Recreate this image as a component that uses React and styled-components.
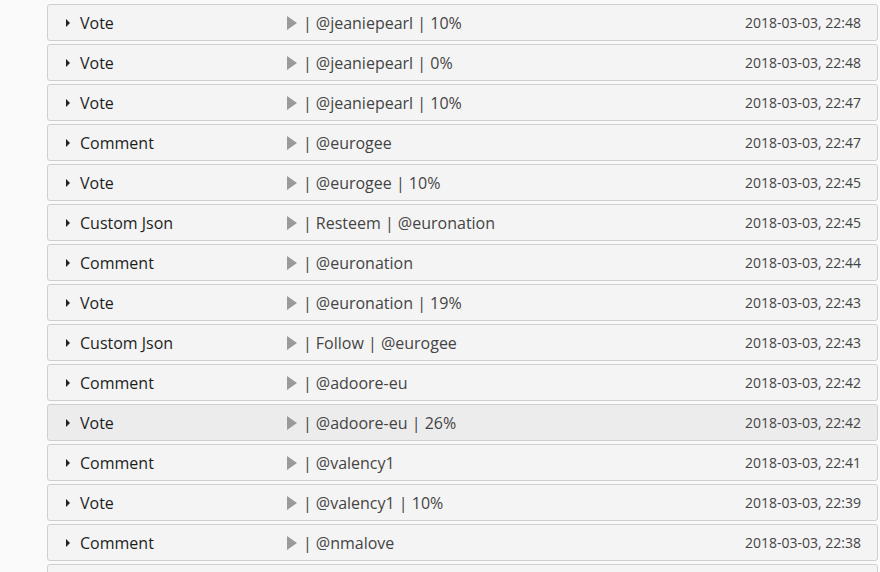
import React from "react";
import styled, { createGlobalStyle } from "styled-components";

const GlobalStyle = createGlobalStyle`
  html, body {
    margin: 0;
    padding: 0;
    background: #fafafa;
    font-family: "Open Sans", "Liberation Sans", sans-serif;
    color: #333;
  }
`;

const ops = [
  { type: "Vote", detail: "@jeaniepearl | 10%", date: "2018-03-03, 22:48" },
  { type: "Vote", detail: "@jeaniepearl | 0%", date: "2018-03-03, 22:48" },
  { type: "Vote", detail: "@jeaniepearl | 10%", date: "2018-03-03, 22:47" },
  { type: "Comment", detail: "@eurogee", date: "2018-03-03, 22:47" },
  { type: "Vote", detail: "@eurogee | 10%", date: "2018-03-03, 22:45" },
  { type: "Custom Json", detail: "Resteem | @euronation", date: "2018-03-03, 22:45" },
  { type: "Comment", detail: "@euronation", date: "2018-03-03, 22:44" },
  { type: "Vote", detail: "@euronation | 19%", date: "2018-03-03, 22:43" },
  { type: "Custom Json", detail: "Follow | @eurogee", date: "2018-03-03, 22:43" },
  { type: "Comment", detail: "@adoore-eu", date: "2018-03-03, 22:42" },
  { type: "Vote", detail: "@adoore-eu | 26%", date: "2018-03-03, 22:42", hover: true },
  { type: "Comment", detail: "@valency1", date: "2018-03-03, 22:41" },
  { type: "Vote", detail: "@valency1 | 10%", date: "2018-03-03, 22:39" },
  { type: "Comment", detail: "@nmalove", date: "2018-03-03, 22:38" },
];

const App = () => (
  <>
    <GlobalStyle />
    <List>
      {ops.map((op, i) => (
        <Row key={i} $hover={op.hover}>
          <Caret />
          <Label>{op.type}</Label>
          <Detail>
            <Play />
            <Sep>|</Sep>
            {op.detail}
          </Detail>
          <Stamp>{op.date}</Stamp>
        </Row>
      ))}
      {/* next row, scrolled below the fold */}
      <Row />
    </List>
  </>
);

export default App;

const List = styled.div`
  display: flex;
  flex-direction: column;
  gap: 3px;
  padding: 4px 2px 0 47px;
  height: 572px;
  overflow: hidden;
  box-sizing: border-box;
`;

const Row = styled.div`
  flex: none;
  display: flex;
  align-items: center;
  height: 37px;
  box-sizing: border-box;
  border: 1px solid #cfcfcf;
  border-radius: 3px;
  background: ${(p) => (p.$hover ? "#ececec" : "#f4f4f4")};
  padding: 0 16px 0 18px;
  font-size: 16px;
`;

const Caret = styled.span`
  width: 0;
  height: 0;
  border-top: 4px solid transparent;
  border-bottom: 4px solid transparent;
  border-left: 4px solid #222;
  margin-right: 10px;
  margin-top: 1px;
`;

const Label = styled.span`
  width: 207px;
  color: #1e1e1e;
  font-weight: 500;
`;

const Detail = styled.span`
  flex: 1;
  display: flex;
  align-items: center;
  color: #444;
`;

const Play = styled.span`
  width: 0;
  height: 0;
  border-top: 7px solid transparent;
  border-bottom: 7px solid transparent;
  border-left: 10px solid #9a9a9a;
  margin-right: 6px;
  margin-top: 1px;
`;

const Sep = styled.span`
  margin-right: 4px;
`;

const Stamp = styled.span`
  font-size: 14px;
  color: #444;
`;
